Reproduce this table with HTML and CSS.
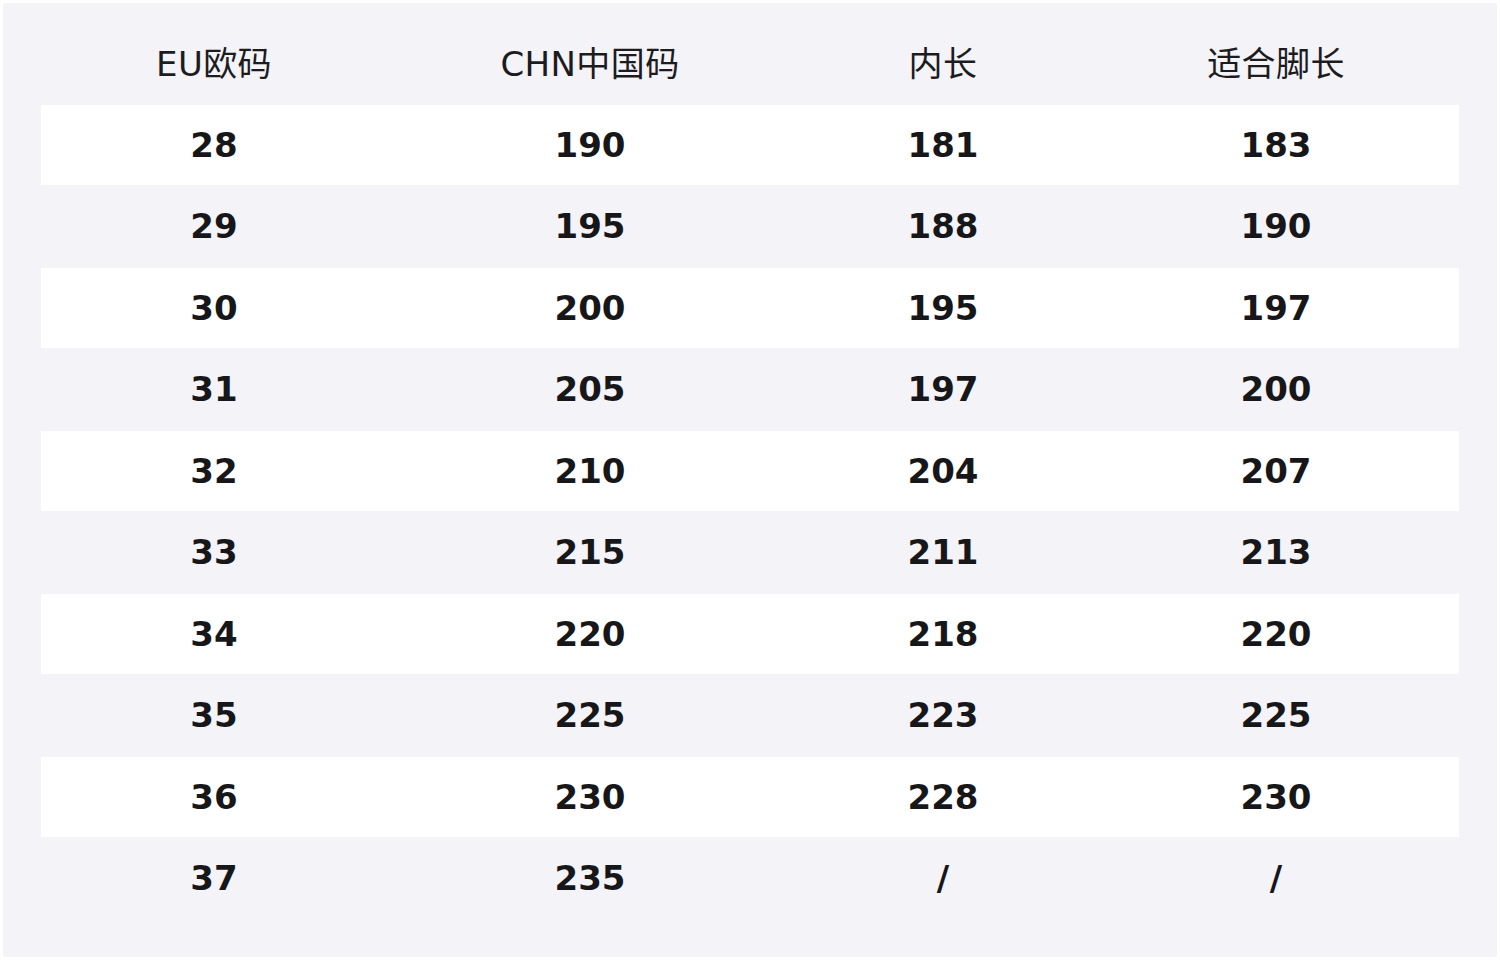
FILE: index.html
```html
<!DOCTYPE html>
<html lang="zh">
<head>
<meta charset="utf-8">
<link rel="stylesheet" href="styles.css">
</head>
<body>
<div class="panel">
  <table class="size-table">
    <colgroup>
      <col class="c1"><col class="c2"><col class="c3"><col class="c4">
    </colgroup>
    <thead>
      <tr><th>EU欧码</th><th>CHN中国码</th><th>内长</th><th>适合脚长</th></tr>
    </thead>
    <tbody>
      <tr><td>28</td><td>190</td><td>181</td><td>183</td></tr>
      <tr><td>29</td><td>195</td><td>188</td><td>190</td></tr>
      <tr><td>30</td><td>200</td><td>195</td><td>197</td></tr>
      <tr><td>31</td><td>205</td><td>197</td><td>200</td></tr>
      <tr><td>32</td><td>210</td><td>204</td><td>207</td></tr>
      <tr><td>33</td><td>215</td><td>211</td><td>213</td></tr>
      <tr><td>34</td><td>220</td><td>218</td><td>220</td></tr>
      <tr><td>35</td><td>225</td><td>223</td><td>225</td></tr>
      <tr><td>36</td><td>230</td><td>228</td><td>230</td></tr>
      <tr><td>37</td><td>235</td><td>/</td><td>/</td></tr>
    </tbody>
  </table>
</div>
</body>
</html>
```

FILE: styles.css
```css
html, body {
  margin: 0;
  padding: 0;
  background: #ffffff;
}
body {
  padding: 3px;
  font-family: "DejaVu Sans", "Noto Sans CJK SC", sans-serif;
  color: #1a1a1f;
}
.panel {
  width: 1494px;
  height: 954px;
  box-sizing: border-box;
  background: #f3f3f8;
  border-radius: 3px;
  padding: 20px 38px 37px 38px;
}
.size-table {
  width: 1418px;
  border-collapse: collapse;
  table-layout: fixed;
}
.c1 { width: 346px; }
.c2 { width: 406px; }
.c3 { width: 300px; }
.c4 { width: 366px; }
.size-table th {
  height: 82px;
  box-sizing: border-box;
  padding: 0 0 6px 0;
  font-weight: normal;
  font-size: 34px;
  letter-spacing: 0.4px;
  text-align: center;
  vertical-align: middle;
  color: #1c1c1f;
}
.size-table td {
  padding: 0;
  font-weight: bold;
  font-size: 34px;
  text-align: center;
  vertical-align: middle;
  color: #17171a;
}
.size-table tbody tr {
  height: 83.5px;
}
.size-table tbody tr:nth-child(odd) {
  height: 79.5px;
  background: #ffffff;
}
```
